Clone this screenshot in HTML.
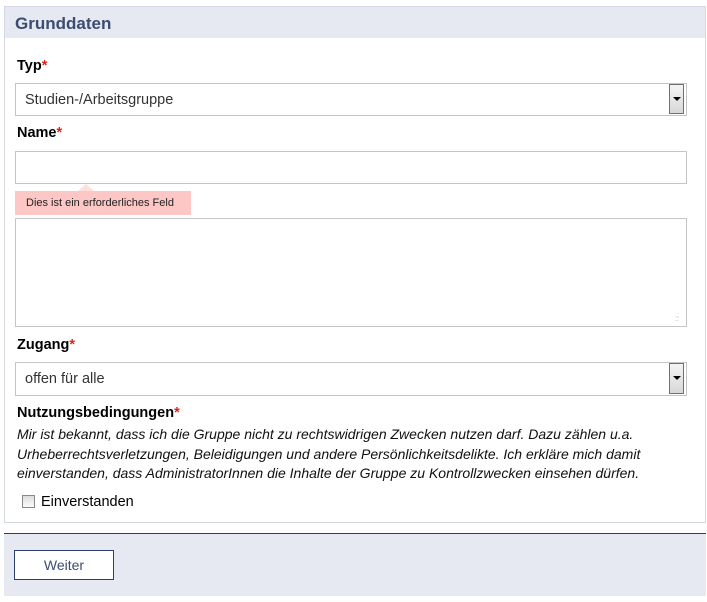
<!DOCTYPE html>
<html><head><meta charset="utf-8"><style>
body{margin:0;background:#fff;font-family:"Liberation Sans",sans-serif;color:#000;width:707px;height:602px;position:relative;overflow:hidden}
.abs{position:absolute}
.box{left:4px;top:6px;width:700px;height:515px;border:1px solid #d3d8e2}
.hd{left:5px;top:7px;width:700px;height:31px;background:#e6e9f1}
.title{left:15px;top:14px;font-size:17px;font-weight:bold;color:#3b4d70}
.lbl{left:17px;font-size:14.5px;font-weight:bold}
.lbl span{color:#e02020}
.field{left:15px;width:670px;border:1px solid #c5c5c5;background:#fff}
.val{left:25px;font-size:14.5px;color:#333}
.btn{width:15px;background:linear-gradient(#f4f4f4,#d8d8d8);border:1px solid #707070;box-sizing:border-box}
.btn:after{content:"";position:absolute;left:3px;top:12px;border-left:4px solid transparent;border-right:4px solid transparent;border-top:4px solid #000}
.tip{left:15px;top:191px;width:176px;height:24px;background:#fcc7c4;font-size:11px;line-height:24px;text-indent:11px;color:#222}
.arr{left:78px;top:184px;border-left:8px solid transparent;border-right:8px solid transparent;border-bottom:7px solid #fde0de}
.txt{left:17px;top:425px;width:680px;font-size:14px;font-style:italic;line-height:19.7px;color:#111}
</style></head><body>
<div class="abs box"></div>
<div class="abs hd"></div>
<div class="abs title">Grunddaten</div>
<div class="abs lbl" style="top:58px">Typ<span>*</span></div>
<div class="abs field" style="top:83px;height:31px"></div>
<div class="abs val" style="top:92px">Studien-/Arbeitsgruppe</div>
<div class="abs btn" style="left:669px;top:84px;height:30px"></div>
<div class="abs lbl" style="top:125px">Name<span>*</span></div>
<div class="abs field" style="top:151px;height:31px"></div>
<div class="abs arr"></div>
<div class="abs tip">Dies ist ein erforderliches Feld</div>
<div class="abs field" style="top:218px;height:107px"></div>
<div class="abs" style="left:675px;top:314px;font-size:7px;color:#aaa;line-height:4px">.:<br>.:</div>
<div class="abs lbl" style="top:337px">Zugang<span>*</span></div>
<div class="abs field" style="top:362px;height:32px"></div>
<div class="abs val" style="top:371px">offen für alle</div>
<div class="abs btn" style="left:669px;top:363px;height:31px"></div>
<div class="abs lbl" style="top:405px">Nutzungsbedingungen<span>*</span></div>
<div class="abs txt">Mir ist bekannt, dass ich die Gruppe nicht zu rechtswidrigen Zwecken nutzen darf. Dazu zählen u.a. Urheberrechtsverletzungen, Beleidigungen und andere Persönlichkeitsdelikte. Ich erkläre mich damit einverstanden, dass AdministratorInnen die Inhalte der Gruppe zu Kontrollzwecken einsehen dürfen.</div>
<div class="abs" style="left:22px;top:495px;width:11px;height:11px;border:1px solid #888;background:linear-gradient(#ddd,#fafafa)"></div>
<div class="abs" style="left:41px;top:494px;font-size:14.5px">Einverstanden</div>
<div class="abs" style="left:4px;top:533px;width:702px;height:62px;background:#e6e9f1;border-top:1px solid #2c3e6a"></div>
<div class="abs" style="left:14px;top:550px;width:98px;height:28px;border:1px solid #2c3e6a;background:#fff;text-align:center;line-height:28px;font-size:14px;color:#3b4d70">Weiter</div>
</body></html>
